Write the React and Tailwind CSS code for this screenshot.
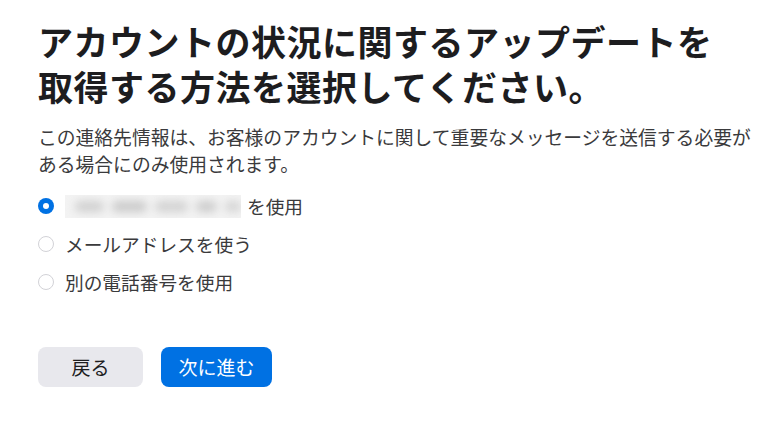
import { useState } from 'react';

const options = [
  { id: 'phone', label: 'を使用', masked: true },
  { id: 'email', label: 'メールアドレスを使う' },
  { id: 'other', label: '別の電話番号を使用' },
];

const App = () => {
  const [selected, setSelected] = useState('phone');

  return (
    <div
      className="min-h-[438px] bg-white px-[38px] pt-[18px] text-[#1d1d1f]"
      style={{ fontFamily: '"Noto Sans CJK JP", "Noto Sans", sans-serif' }}
    >
      <h1 className="text-[35px] font-bold leading-[45px] tracking-[0.5px]">
        アカウントの状況に関するアップデートを
        <br />
        取得する方法を選択してください。
      </h1>

      <p className="mt-[15px] whitespace-nowrap text-[18.8px] leading-[27px] text-[#3a3a3c]">
        この連絡先情報は、お客様のアカウントに関して重要なメッセージを送信する必要が
        <br />
        ある場合にのみ使用されます。
      </p>

      <div className="mt-[16px] flex flex-col gap-[12px]">
        {options.map((opt) => {
          const on = selected === opt.id;
          return (
            <label
              key={opt.id}
              className="flex h-[26px] cursor-pointer items-center"
              onClick={() => setSelected(opt.id)}
            >
              <span
                className={
                  on
                    ? 'flex h-[16px] w-[16px] items-center justify-center rounded-full bg-[#0071e3]'
                    : 'h-[16px] w-[16px] rounded-full border border-[#d2d2d7] bg-white'
                }
              >
                {on && <span className="h-[6px] w-[6px] rounded-full bg-white" />}
              </span>
              <span className="ml-[11px] flex items-center text-[18.7px] text-[#3a3a3c]">
                {opt.masked && (
                  <span className="mr-[6px] block h-[23px] w-[176px] overflow-hidden bg-[#f3f3f3]">
                    <span className="flex h-full w-full items-center gap-[8px] pl-[10px] blur-[4px]">
                      <span className="h-[11px] w-[30px] rounded-full bg-[#d0d0d0]" />
                      <span className="h-[11px] w-[36px] rounded-full bg-[#cacaca]" />
                      <span className="h-[11px] w-[34px] rounded-full bg-[#d2d2d2]" />
                      <span className="h-[11px] w-[22px] rounded-full bg-[#cccccc]" />
                      <span className="h-[11px] w-[16px] rounded-full bg-[#d4d4d4]" />
                    </span>
                  </span>
                )}
                {opt.label}
              </span>
            </label>
          );
        })}
      </div>

      <div className="mt-[52px] flex gap-[18px]">
        <button className="h-[40px] w-[105px] rounded-[8px] bg-[#e8e8ed] text-[19px] text-[#1d1d1f]">
          戻る
        </button>
        <button className="h-[40px] w-[111px] rounded-[8px] bg-[#0071e3] text-[19px] text-white">
          次に進む
        </button>
      </div>
    </div>
  );
};

export default App;
